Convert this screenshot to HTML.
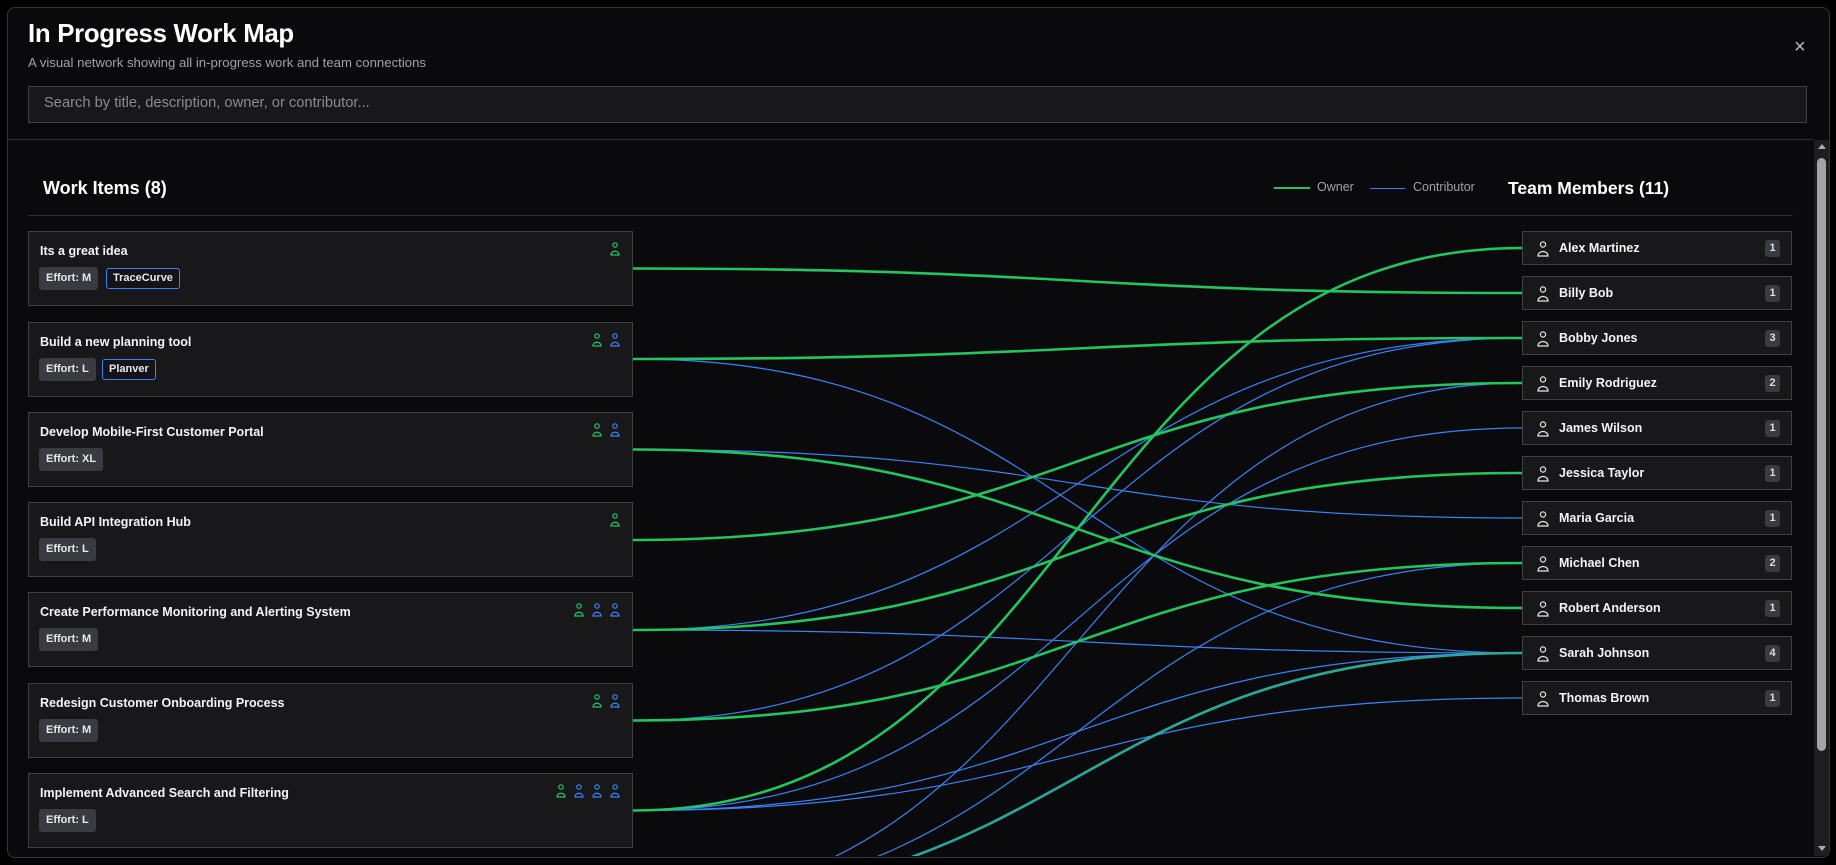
<!DOCTYPE html>
<html><head><meta charset="utf-8"><style>
*{box-sizing:border-box;margin:0;padding:0}
body{width:1836px;height:865px;background:#000;font-family:"Liberation Sans",sans-serif;overflow:hidden;position:relative;color:#fff}
.modal{position:absolute;left:7px;top:7px;width:1823px;height:851px;background:#0a0a0c;border:1px solid #34343a;border-radius:8px;overflow:hidden}
.abs{position:absolute}
.card{position:absolute;left:28px;width:605px;height:75px;background:#18181b;border:1px solid #3f3f46}
.card .t{position:absolute;left:11px;top:12px;font-size:12.5px;font-weight:bold;color:#f4f4f5;white-space:nowrap}
.badge{position:absolute;top:35px;height:23px;line-height:23px;padding:0 7px;font-size:11px;font-weight:bold;border-radius:3px;background:#3a3b41;color:#e8e8ea}
.tag{background:#141418;border:1px solid #3b82f6;height:21px;line-height:19px;top:36px;padding:0 6px}
.icons{position:absolute;right:12px;top:10px;display:flex;gap:8px}
.pc{position:absolute;left:1522px;width:270px;height:34px;background:#18181b;border:1px solid #3f3f46}
.pc .n{position:absolute;left:36px;top:9px;font-size:12.5px;font-weight:bold;color:#f4f4f5}
.pc .c{position:absolute;right:11px;top:8px;width:15px;height:17px;line-height:17px;text-align:center;font-size:11px;font-weight:bold;background:#3a3b41;border-radius:3px;color:#ddd}
.pc svg{position:absolute;left:14px;top:9px}
</style></head><body>
<div class="modal"></div>
<div class="abs" style="left:28px;top:20px;font-size:25.8px;font-weight:bold;letter-spacing:-0.3px">In Progress Work Map</div>
<div class="abs" style="left:28px;top:55px;font-size:13.2px;color:#a1a1aa">A visual network showing all in-progress work and team connections</div>
<div class="abs" style="left:1794px;top:36px;font-size:20px;color:#bbb">×</div>
<div class="abs" style="left:28px;top:86px;width:1779px;height:37px;border:1px solid #3f3f46;background:#18181b"></div>
<div class="abs" style="left:44px;top:95px;font-size:14.7px;color:#8a8a92">Search by title, description, owner, or contributor...</div>
<div class="abs" style="left:8px;top:139px;width:1806px;height:1px;background:#2e2e33"></div>
<div class="abs" style="left:43px;top:178px;font-size:18px;font-weight:bold">Work Items (8)</div>
<div class="abs" style="left:1508px;top:178px;font-size:17.5px;font-weight:bold">Team Members (11)</div>
<div class="abs" style="left:1274px;top:187px;width:36px;height:2px;background:#22c55e"></div>
<div class="abs" style="left:1317px;top:180px;font-size:12.5px;color:#a1a1aa">Owner</div>
<div class="abs" style="left:1370px;top:188px;width:35px;height:1px;background:#3b82f6"></div>
<div class="abs" style="left:1413px;top:180px;font-size:12.5px;color:#a1a1aa">Contributor</div>
<div class="abs" style="left:28px;top:215px;width:1765px;height:1px;background:#2e2e33"></div>

<svg class="abs" style="left:0;top:0" width="1836" height="857" viewBox="0 0 1836 857">
<defs><clipPath id="cp"><rect x="0" y="140" width="1812" height="716"/></clipPath></defs>
<g clip-path="url(#cp)" fill="none">
<g stroke="#3b82f6" stroke-width="1.2">
<path d="M633 359 C1077 359 1077 653 1522 653"/>
<path d="M633 449.5 C1077 449.5 1077 518 1522 518"/>
<path d="M633 630 C1077 630 1077 338 1522 338"/>
<path d="M633 630 C1077 630 1077 653 1522 653"/>
<path d="M633 720.5 C1077 720.5 1077 338 1522 338"/>
<path d="M633 810.5 C1077 810.5 1077 653 1522 653"/>
<path d="M633 810.5 C1077 810.5 1077 698 1522 698"/>
<path d="M633 810.5 C1077 810.5 1077 428 1522 428"/>
<path d="M633 901 C1077 901 1077 383 1522 383"/>
<path d="M633 901 C1077 901 1077 563 1522 563"/>
</g>
<g stroke="#22c55e" stroke-width="2.6">
<path d="M633 268.5 C1077 268.5 1077 293 1522 293"/>
<path d="M633 359 C1077 359 1077 338 1522 338"/>
<path d="M633 449.5 C1077 449.5 1077 608 1522 608"/>
<path d="M633 540 C1077 540 1077 383 1522 383"/>
<path d="M633 630 C1077 630 1077 473 1522 473"/>
<path d="M633 720.5 C1077 720.5 1077 563 1522 563"/>
<path d="M633 810.5 C1077 810.5 1077 248 1522 248"/>
<path d="M633 901 C1077 901 1077 653 1522 653"/>
</g>
<path d="M633 901 C1077 901 1077 653 1522 653" stroke="#3b82f6" stroke-width="1"/>
</g>
</svg>

<div class="card" style="top:231px"><div class="t">Its a great idea</div><div class="badge" style="left:10px">Effort: M</div><div class="badge tag" style="left:77px">TraceCurve</div>
<div class="icons"><svg width="10" height="14" viewBox="0 0 10 14" fill="none" stroke="#22c55e" stroke-width="1.2"><circle cx="5" cy="3" r="2.2"/><path d="M1 13 C1 8 9 8 9 13 Z"/></svg></div></div>

<div class="card" style="top:321.5px"><div class="t">Build a new planning tool</div><div class="badge" style="left:10px">Effort: L</div><div class="badge tag" style="left:73px">Planver</div>
<div class="icons"><svg width="10" height="14" viewBox="0 0 10 14" fill="none" stroke="#22c55e" stroke-width="1.2"><circle cx="5" cy="3" r="2.2"/><path d="M1 13 C1 8 9 8 9 13 Z"/></svg><svg width="10" height="14" viewBox="0 0 10 14" fill="none" stroke="#3b82f6" stroke-width="1.2"><circle cx="5" cy="3" r="2.2"/><path d="M1 13 C1 8 9 8 9 13 Z"/></svg></div></div>

<div class="card" style="top:412px"><div class="t">Develop Mobile-First Customer Portal</div><div class="badge" style="left:10px">Effort: XL</div>
<div class="icons"><svg width="10" height="14" viewBox="0 0 10 14" fill="none" stroke="#22c55e" stroke-width="1.2"><circle cx="5" cy="3" r="2.2"/><path d="M1 13 C1 8 9 8 9 13 Z"/></svg><svg width="10" height="14" viewBox="0 0 10 14" fill="none" stroke="#3b82f6" stroke-width="1.2"><circle cx="5" cy="3" r="2.2"/><path d="M1 13 C1 8 9 8 9 13 Z"/></svg></div></div>

<div class="card" style="top:502px"><div class="t">Build API Integration Hub</div><div class="badge" style="left:10px">Effort: L</div>
<div class="icons"><svg width="10" height="14" viewBox="0 0 10 14" fill="none" stroke="#22c55e" stroke-width="1.2"><circle cx="5" cy="3" r="2.2"/><path d="M1 13 C1 8 9 8 9 13 Z"/></svg></div></div>

<div class="card" style="top:592px"><div class="t">Create Performance Monitoring and Alerting System</div><div class="badge" style="left:10px">Effort: M</div>
<div class="icons"><svg width="10" height="14" viewBox="0 0 10 14" fill="none" stroke="#22c55e" stroke-width="1.2"><circle cx="5" cy="3" r="2.2"/><path d="M1 13 C1 8 9 8 9 13 Z"/></svg><svg width="10" height="14" viewBox="0 0 10 14" fill="none" stroke="#3b82f6" stroke-width="1.2"><circle cx="5" cy="3" r="2.2"/><path d="M1 13 C1 8 9 8 9 13 Z"/></svg><svg width="10" height="14" viewBox="0 0 10 14" fill="none" stroke="#3b82f6" stroke-width="1.2"><circle cx="5" cy="3" r="2.2"/><path d="M1 13 C1 8 9 8 9 13 Z"/></svg></div></div>

<div class="card" style="top:683px"><div class="t">Redesign Customer Onboarding Process</div><div class="badge" style="left:10px">Effort: M</div>
<div class="icons"><svg width="10" height="14" viewBox="0 0 10 14" fill="none" stroke="#22c55e" stroke-width="1.2"><circle cx="5" cy="3" r="2.2"/><path d="M1 13 C1 8 9 8 9 13 Z"/></svg><svg width="10" height="14" viewBox="0 0 10 14" fill="none" stroke="#3b82f6" stroke-width="1.2"><circle cx="5" cy="3" r="2.2"/><path d="M1 13 C1 8 9 8 9 13 Z"/></svg></div></div>

<div class="card" style="top:773px"><div class="t">Implement Advanced Search and Filtering</div><div class="badge" style="left:10px">Effort: L</div>
<div class="icons"><svg width="10" height="14" viewBox="0 0 10 14" fill="none" stroke="#22c55e" stroke-width="1.2"><circle cx="5" cy="3" r="2.2"/><path d="M1 13 C1 8 9 8 9 13 Z"/></svg><svg width="10" height="14" viewBox="0 0 10 14" fill="none" stroke="#3b82f6" stroke-width="1.2"><circle cx="5" cy="3" r="2.2"/><path d="M1 13 C1 8 9 8 9 13 Z"/></svg><svg width="10" height="14" viewBox="0 0 10 14" fill="none" stroke="#3b82f6" stroke-width="1.2"><circle cx="5" cy="3" r="2.2"/><path d="M1 13 C1 8 9 8 9 13 Z"/></svg><svg width="10" height="14" viewBox="0 0 10 14" fill="none" stroke="#3b82f6" stroke-width="1.2"><circle cx="5" cy="3" r="2.2"/><path d="M1 13 C1 8 9 8 9 13 Z"/></svg></div></div>

<div class="pc" style="top:231px"><svg width="12" height="16" viewBox="0 0 12 16" fill="none" stroke="#e5e5e5" stroke-width="1.2"><circle cx="6" cy="3.5" r="2.6"/><path d="M1 15 C1 9 11 9 11 15 Z"/></svg><div class="n">Alex Martinez</div><div class="c">1</div></div>
<div class="pc" style="top:276px"><svg width="12" height="16" viewBox="0 0 12 16" fill="none" stroke="#e5e5e5" stroke-width="1.2"><circle cx="6" cy="3.5" r="2.6"/><path d="M1 15 C1 9 11 9 11 15 Z"/></svg><div class="n">Billy Bob</div><div class="c">1</div></div>
<div class="pc" style="top:321px"><svg width="12" height="16" viewBox="0 0 12 16" fill="none" stroke="#e5e5e5" stroke-width="1.2"><circle cx="6" cy="3.5" r="2.6"/><path d="M1 15 C1 9 11 9 11 15 Z"/></svg><div class="n">Bobby Jones</div><div class="c">3</div></div>
<div class="pc" style="top:366px"><svg width="12" height="16" viewBox="0 0 12 16" fill="none" stroke="#e5e5e5" stroke-width="1.2"><circle cx="6" cy="3.5" r="2.6"/><path d="M1 15 C1 9 11 9 11 15 Z"/></svg><div class="n">Emily Rodriguez</div><div class="c">2</div></div>
<div class="pc" style="top:411px"><svg width="12" height="16" viewBox="0 0 12 16" fill="none" stroke="#e5e5e5" stroke-width="1.2"><circle cx="6" cy="3.5" r="2.6"/><path d="M1 15 C1 9 11 9 11 15 Z"/></svg><div class="n">James Wilson</div><div class="c">1</div></div>
<div class="pc" style="top:456px"><svg width="12" height="16" viewBox="0 0 12 16" fill="none" stroke="#e5e5e5" stroke-width="1.2"><circle cx="6" cy="3.5" r="2.6"/><path d="M1 15 C1 9 11 9 11 15 Z"/></svg><div class="n">Jessica Taylor</div><div class="c">1</div></div>
<div class="pc" style="top:501px"><svg width="12" height="16" viewBox="0 0 12 16" fill="none" stroke="#e5e5e5" stroke-width="1.2"><circle cx="6" cy="3.5" r="2.6"/><path d="M1 15 C1 9 11 9 11 15 Z"/></svg><div class="n">Maria Garcia</div><div class="c">1</div></div>
<div class="pc" style="top:546px"><svg width="12" height="16" viewBox="0 0 12 16" fill="none" stroke="#e5e5e5" stroke-width="1.2"><circle cx="6" cy="3.5" r="2.6"/><path d="M1 15 C1 9 11 9 11 15 Z"/></svg><div class="n">Michael Chen</div><div class="c">2</div></div>
<div class="pc" style="top:591px"><svg width="12" height="16" viewBox="0 0 12 16" fill="none" stroke="#e5e5e5" stroke-width="1.2"><circle cx="6" cy="3.5" r="2.6"/><path d="M1 15 C1 9 11 9 11 15 Z"/></svg><div class="n">Robert Anderson</div><div class="c">1</div></div>
<div class="pc" style="top:636px"><svg width="12" height="16" viewBox="0 0 12 16" fill="none" stroke="#e5e5e5" stroke-width="1.2"><circle cx="6" cy="3.5" r="2.6"/><path d="M1 15 C1 9 11 9 11 15 Z"/></svg><div class="n">Sarah Johnson</div><div class="c">4</div></div>
<div class="pc" style="top:681px"><svg width="12" height="16" viewBox="0 0 12 16" fill="none" stroke="#e5e5e5" stroke-width="1.2"><circle cx="6" cy="3.5" r="2.6"/><path d="M1 15 C1 9 11 9 11 15 Z"/></svg><div class="n">Thomas Brown</div><div class="c">1</div></div>

<div class="abs" style="left:1814px;top:140px;width:15px;height:716px;background:#1e1e20"></div>
<div class="abs" style="left:1818px;top:144px;width:0;height:0;border-left:4px solid transparent;border-right:4px solid transparent;border-bottom:5px solid #aaa"></div>
<div class="abs" style="left:1817px;top:158px;width:9px;height:593px;background:#a3a3a3;border-radius:5px"></div>
<div class="abs" style="left:1818px;top:846px;width:0;height:0;border-left:4px solid transparent;border-right:4px solid transparent;border-top:5px solid #aaa"></div>
</body></html>
